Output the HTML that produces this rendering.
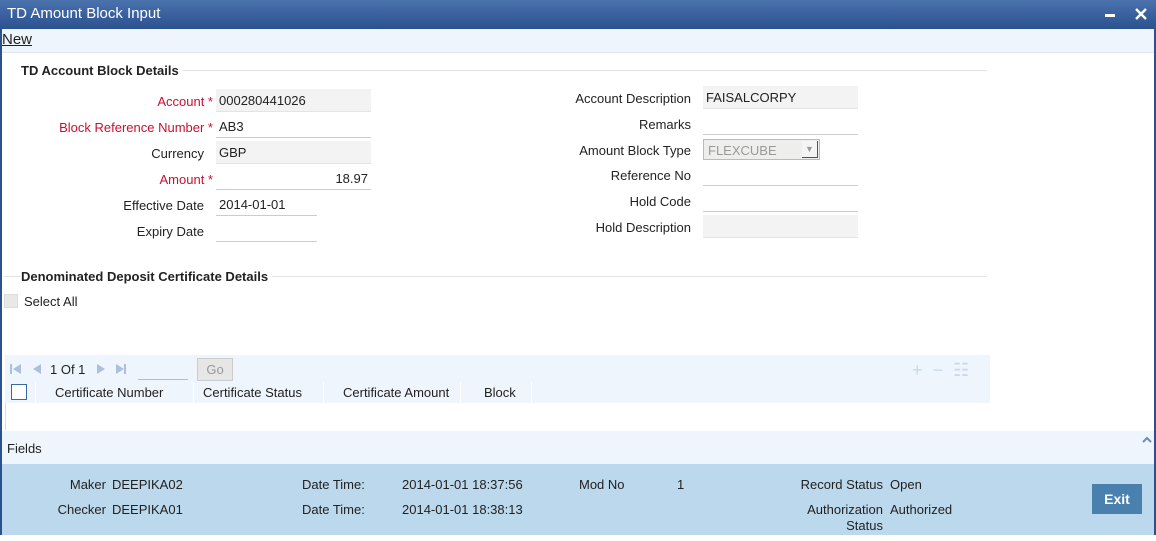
<!DOCTYPE html>
<html><head><style>
*{margin:0;padding:0;box-sizing:border-box}
body{width:1156px;height:541px;position:relative;background:#fff;font-family:"Liberation Sans",Arial,sans-serif;font-size:13px;color:#222;overflow:hidden}
.a{position:absolute;white-space:nowrap}
.r{text-align:right}
.red{color:#c8102e}
.f{position:absolute;height:23px;border-bottom:1px solid #ccc;padding:4px 3px 2px;font-size:13px}
.g{background:#f3f3f3;border-bottom:1px solid #e4e4e4}
.hd{font-weight:bold;font-size:13px;background:#fff;padding-right:4px}
.line{position:absolute;height:1px;background:#e3e3e3}
</style></head><body>
<div class="a" style="left:0;top:0;width:1156px;height:29px;background:linear-gradient(#4a72ac,#2b5190)"></div>
<div class="a" style="left:7px;top:5px;color:#fff;font-size:15px">TD Amount Block Input</div>
<div class="a" style="left:1105px;top:14px;width:10px;height:3px;background:#fff"></div>
<svg class="a" style="left:1134px;top:7px" width="14" height="14"><path d="M2 2L12 12M12 2L2 12" stroke="#fff" stroke-width="2.4"/></svg>
<div class="a" style="left:0;top:29px;width:2px;height:506px;background:#2b5190"></div>
<div class="a" style="left:1154px;top:29px;width:2px;height:506px;background:#2b5190"></div>
<div class="a" style="left:2px;top:29px;width:1152px;height:24px;background:#eef5fd;border-bottom:1px solid #dde6ef"></div>
<div class="a" style="left:2px;top:31px;font-size:15px;text-decoration:underline">New</div>

<div class="line" style="left:183px;top:70px;width:804px"></div>
<div class="a hd" style="left:21px;top:63px">TD Account Block Details</div>

<div class="a r" style="right:943px;top:94px"><span class="red">Account *</span></div>
<div class="f g" style="left:216px;top:89px;width:155px">000280441026</div>
<div class="a r" style="right:943px;top:120px"><span class="red">Block Reference Number *</span></div>
<div class="f" style="left:216px;top:115px;width:155px">AB3</div>
<div class="a r" style="right:952px;top:146px">Currency</div>
<div class="f g" style="left:216px;top:141px;width:155px">GBP</div>
<div class="a r" style="right:943px;top:172px"><span class="red">Amount *</span></div>
<div class="f" style="left:216px;top:167px;width:155px;text-align:right">18.97</div>
<div class="a r" style="right:952px;top:198px">Effective Date</div>
<div class="f" style="left:216px;top:193px;width:101px">2014-01-01</div>
<div class="a r" style="right:952px;top:224px">Expiry Date</div>
<div class="f" style="left:216px;top:219px;width:101px"></div>

<div class="a r" style="right:465px;top:91px">Account Description</div>
<div class="f g" style="left:703px;top:86px;width:155px">FAISALCORPY</div>
<div class="a r" style="right:465px;top:117px">Remarks</div>
<div class="f" style="left:703px;top:112px;width:155px"></div>
<div class="a r" style="right:465px;top:143px">Amount Block Type</div>
<div class="a" style="left:703px;top:139px;width:117px;height:21px;background:#eeeeec;border:1px solid #bbb;color:#999;padding:3px 4px 1px">FLEXCUBE</div>
<div class="a" style="left:802px;top:141px;width:16px;height:17px;background:#f4f4f4;border-right:1px solid #555;border-bottom:1px solid #555;color:#999;font-size:9px;text-align:center;line-height:17px">▼</div>
<div class="a r" style="right:465px;top:168px">Reference No</div>
<div class="f" style="left:703px;top:163px;width:155px"></div>
<div class="a r" style="right:465px;top:194px">Hold Code</div>
<div class="f" style="left:703px;top:189px;width:155px"></div>
<div class="a r" style="right:465px;top:220px">Hold Description</div>
<div class="f g" style="left:703px;top:215px;width:155px"></div>

<div class="line" style="left:4px;top:276px;width:983px"></div>
<div class="a hd" style="left:21px;top:269px">Denominated Deposit Certificate Details</div>
<div class="a" style="left:4px;top:294px;width:14px;height:14px;background:#e8e8e8;border:1px solid #ddd"></div>
<div class="a" style="left:24px;top:294px">Select All</div>

<div class="a" style="left:5px;top:355px;width:985px;height:27px;background:#eef5fd"></div>
<svg class="a" style="left:10px;top:363px" width="36" height="12"><path d="M1 1V11" stroke="#aac0dc" stroke-width="2"/><path d="M11 1L3 6L11 11Z M31 1L23 6L31 11Z" fill="#aac0dc"/></svg>
<div class="a" style="left:50px;top:362px">1 Of 1</div>
<svg class="a" style="left:96px;top:363px" width="36" height="12"><path d="M1 1L9 6L1 11Z M20 1L28 6L20 11Z" fill="#aac0dc"/><path d="M29 1V11" stroke="#aac0dc" stroke-width="2"/></svg>
<div class="a" style="left:138px;top:379px;width:50px;height:1px;background:#bbb"></div>
<div class="a" style="left:197px;top:358px;width:36px;height:23px;background:#e6e6e6;border:1px solid #ccc;color:#999;font-size:13px;text-align:center;line-height:21px">Go</div>
<div class="a" style="left:912px;top:360px;color:#c8d8ec;font-size:18px">+&nbsp;&nbsp;−&nbsp;&nbsp;☷</div>
<div class="a" style="left:5px;top:382px;width:985px;height:21px;background:#eef5fd"></div>
<div class="a" style="left:11px;top:384px;width:16px;height:16px;border:1px solid #3a6aa0;background:#fff"></div>
<div class="a" style="left:35px;top:382px;width:1px;height:21px;background:#fff"></div>
<div class="a" style="left:193px;top:382px;width:1px;height:21px;background:#fff"></div>
<div class="a" style="left:323px;top:382px;width:1px;height:21px;background:#fff"></div>
<div class="a" style="left:460px;top:382px;width:1px;height:21px;background:#fff"></div>
<div class="a" style="left:531px;top:382px;width:1px;height:21px;background:#fff"></div>
<div class="a" style="left:55px;top:385px">Certificate Number</div>
<div class="a" style="left:203px;top:385px">Certificate Status</div>
<div class="a" style="left:343px;top:385px">Certificate Amount</div>
<div class="a" style="left:484px;top:385px">Block</div>
<div class="a" style="left:5px;top:403px;width:1px;height:27px;background:#ddd"></div>

<div class="a" style="left:2px;top:431px;width:1152px;height:33px;background:#eef5fd"></div>
<div class="a" style="left:7px;top:441px">Fields</div>
<svg class="a" style="left:1142px;top:436px" width="10" height="8"><path d="M1 6L5 2L9 6" stroke="#6b8cb8" stroke-width="2" fill="none"/></svg>
<div class="a" style="left:2px;top:464px;width:1152px;height:71px;background:#bcd8ec"></div>
<div class="a r" style="right:1050px;top:477px">Maker</div><div class="a" style="left:112px;top:477px">DEEPIKA02</div>
<div class="a r" style="right:1050px;top:502px">Checker</div><div class="a" style="left:112px;top:502px">DEEPIKA01</div>
<div class="a" style="left:302px;top:477px">Date Time:</div><div class="a" style="left:402px;top:477px">2014-01-01 18:37:56</div>
<div class="a" style="left:302px;top:502px">Date Time:</div><div class="a" style="left:402px;top:502px">2014-01-01 18:38:13</div>
<div class="a" style="left:579px;top:477px">Mod No</div><div class="a" style="left:677px;top:477px">1</div>
<div class="a r" style="right:273px;top:477px">Record Status</div><div class="a" style="left:890px;top:477px">Open</div>
<div class="a r" style="right:273px;top:502px;line-height:16px">Authorization<br>Status</div><div class="a" style="left:890px;top:502px">Authorized</div>
<div class="a" style="left:1092px;top:484px;width:50px;height:30px;background:#4a80ae;color:#fff;font-weight:bold;font-size:14px;text-align:center;line-height:30px">Exit</div>
</body></html>
